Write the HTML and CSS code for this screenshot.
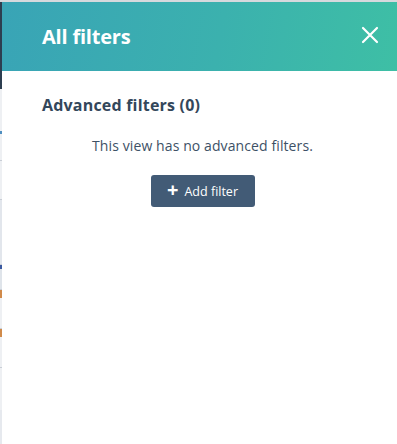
FILE: index.html
```html
<!DOCTYPE html>
<html>
<head>
<meta charset="utf-8">
<link rel="stylesheet" href="styles.css">
</head>
<body>
<div class="page">
  <div class="strip">
    <div class="seg dark"></div>
    <div class="seg light"></div>
    <div class="seg mark blue"></div>
    <div class="seg light l2"></div>
    <div class="seg line"></div>
    <div class="seg light l3"></div>
    <div class="seg line"></div>
    <div class="seg light l4"></div>
    <div class="seg line"></div>
    <div class="seg blue2"></div>
    <div class="seg light l5"></div>
    <div class="seg line"></div>
    <div class="seg orange"></div>
    <div class="seg light l6"></div>
    <div class="seg line"></div>
    <div class="seg orange"></div>
    <div class="seg light l7"></div>
    <div class="seg line"></div>
    <div class="seg light"></div>
  </div>
  <div class="panel">
    <header class="header">
      <h1 class="title">All filters</h1>
      <button class="close" aria-label="Close">
        <svg width="18" height="18" viewBox="0 0 18 18"><path d="M2 2 L16 16 M16 2 L2 16" stroke="#fff" stroke-width="2.2" stroke-linecap="round"/></svg>
      </button>
    </header>
    <section class="content">
      <h2 class="section-title">Advanced filters (0)</h2>
      <p class="empty">This view has no advanced filters.</p>
      <div class="actions">
        <button class="add-btn"><span class="plus">+</span>Add filter</button>
      </div>
    </section>
  </div>
</div>
</body>
</html>
```
FILE: styles.css
```css
* { box-sizing: border-box; }
html, body { margin: 0; padding: 0; }
body {
  width: 397px;
  height: 444px;
  overflow: hidden;
  background: #fff;
  font-family: "Open Sans", "Noto Sans", sans-serif;
  border-top: 2px solid #d6d9dd;
}
.page {
  display: flex;
  height: 442px;
}
.strip {
  width: 2px;
  flex: 0 0 2px;
  display: flex;
  flex-direction: column;
  background: #e6e9ee;
}
.seg { flex: 0 0 auto; }
.dark { height: 87px; background: #2d3e50; }
.light { height: 42px; background: #eef0f3; }
.blue { height: 3px; background: #4f8fc0; }
.l2 { height: 26px; }
.line { height: 1px; background: #c9ced6; }
.l3 { height: 38px; background: #eef0f3; }
.l4 { height: 64px; background: #e2e6ec; }
.blue2 { height: 4px; background: #3b5aa0; }
.l5 { height: 20px; background: #dfe4ea; }
.orange { height: 8px; background: #d08a4a; }
.l6 { height: 30px; }
.l7 { height: 30px; }
.panel {
  flex: 1;
  display: flex;
  flex-direction: column;
  background: #fff;
}
.header {
  height: 69px;
  display: flex;
  align-items: center;
  justify-content: space-between;
  padding: 0 18px 0 40px;
  background: linear-gradient(100deg, #39a4b6 0%, #3bb1ae 55%, #3ebfa5 100%);
}
.title {
  margin: 0;
  color: #fff;
  font-size: 20px;
  font-weight: 700;
  letter-spacing: -0.2px;
}
.close {
  border: 0;
  background: none;
  padding: 0;
  width: 18px;
  height: 18px;
  display: flex;
  margin-top: -3px;
}
.content {
  padding: 23px 34px 0 40px;
  color: #33475b;
}
.section-title {
  margin: 0;
  font-size: 16px;
  font-weight: 700;
  color: #33475b;
  line-height: 22px;
  letter-spacing: 0.2px;
}
.empty {
  margin: 20px 0 0;
  text-align: center;
  font-size: 14px;
  color: #3d5166;
  line-height: 20px;
  letter-spacing: 0.1px;
}
.actions {
  display: flex;
  justify-content: center;
  margin-top: 19px;
}
.add-btn {
  width: 104px;
  height: 32px;
  border: 0;
  border-radius: 3px;
  background: #425b76;
  color: #fff;
  font-family: inherit;
  font-size: 12.5px;
  display: flex;
  align-items: center;
  justify-content: center;
  gap: 6px;
  padding: 0;
}
.plus {
  font-size: 20px;
  font-weight: 700;
  line-height: 1;
  margin-top: -2px;
}
```
